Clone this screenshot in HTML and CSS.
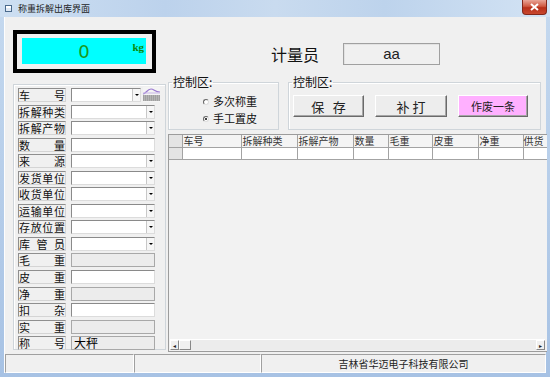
FILE: index.html
```html
<!DOCTYPE html>
<html lang="zh-CN">
<head>
    <meta charset="UTF-8">
    <title>称重拆解出库界面</title>
    <link rel="stylesheet" href="styles.css">
</head>
<body>

<div class="window">
    <div class="titlebar">
        <span class="app_icon"></span>
        <span class="title">称重拆解出库界面</span>
        <span class="close">
            <svg width="9" height="8" viewBox="0 0 9 8"><path d="M1 1 L8 7 M8 1 L1 7" stroke="#fff" stroke-width="2"/></svg>
        </span>
    </div>

    <div class="client">
        <div class="main">
            <div class="left">
                <div class="scale">
                    <div class="screen">
                        <span class="reading">0</span>
                        <span class="unit">kg</span>
                    </div>
                </div>

                <div class="form">
                    <div class="row">
                        <span class="label">车号</span>
                        <span class="field short"><span class="drop"></span></span>
                        <svg class="truck" width="17" height="15" viewBox="0 0 17 15">
                            <rect x="0" y="0" width="17" height="15" fill="#f4f4f4"/>
                            <path d="M0 7 C3 7 4 2 8 2 C11 2 12 5 17 5" stroke="#9b7ad0" stroke-width="1.2" fill="none"/>
                            <path d="M0 6 L17 6" stroke="#c7b5e6" stroke-width="1"/>
                            <rect x="0" y="8" width="17" height="6" fill="#b4b4b4"/>
                            <path d="M0 9 H17 M0 11 H17 M0 13 H17" stroke="#8c8c8c" stroke-width="1" stroke-dasharray="1 1"/>
                        </svg>
                    </div>
                    <div class="row">
                        <span class="label">拆解种类</span>
                        <span class="field"><span class="drop"></span></span>
                    </div>
                    <div class="row">
                        <span class="label">拆解产物</span>
                        <span class="field"><span class="drop"></span></span>
                    </div>
                    <div class="row">
                        <span class="label">数量</span>
                        <span class="field"></span>
                    </div>
                    <div class="row">
                        <span class="label">来源</span>
                        <span class="field"><span class="drop"></span></span>
                    </div>
                    <div class="row">
                        <span class="label">发货单位</span>
                        <span class="field"><span class="drop"></span></span>
                    </div>
                    <div class="row">
                        <span class="label">收货单位</span>
                        <span class="field"><span class="drop"></span></span>
                    </div>
                    <div class="row">
                        <span class="label">运输单位</span>
                        <span class="field"><span class="drop"></span></span>
                    </div>
                    <div class="row">
                        <span class="label">存放位置</span>
                        <span class="field"><span class="drop"></span></span>
                    </div>
                    <div class="row">
                        <span class="label">库管员</span>
                        <span class="field"><span class="drop"></span></span>
                    </div>
                    <div class="row">
                        <span class="label">毛重</span>
                        <span class="field off"></span>
                    </div>
                    <div class="row">
                        <span class="label">皮重</span>
                        <span class="field"></span>
                    </div>
                    <div class="row">
                        <span class="label">净重</span>
                        <span class="field off"></span>
                    </div>
                    <div class="row">
                        <span class="label">扣杂</span>
                        <span class="field"></span>
                    </div>
                    <div class="row">
                        <span class="label">实重</span>
                        <span class="field off"></span>
                    </div>
                    <div class="row">
                        <span class="label">称号</span>
                        <span class="field off">大秤</span>
                    </div>
                </div>
            </div>

            <div class="right">
                <div class="operator">
                    <span class="op_label">计量员</span>
                    <span class="op_box">aa</span>
                </div>

                <div class="controls">
                    <fieldset class="group mode">
                        <legend>控制区:</legend>
                        <div class="radios">
                            <div class="radio"><span class="dot"></span>多次称重</div>
                            <div class="radio"><span class="dot checked"></span>手工置皮</div>
                        </div>
                    </fieldset>
                    <fieldset class="group actions">
                        <legend>控制区:</legend>
                        <div class="buttons">
                            <span class="btn save">保&nbsp;&nbsp;&nbsp;存</span>
                            <span class="btn reprint">补 打</span>
                            <span class="btn cancel">作废一条</span>
                        </div>
                    </fieldset>
                </div>

                <div class="grid">
                    <div class="table_wrap">
                        <table>
                            <colgroup>
                                <col style="width:13px"><col style="width:59px"><col style="width:56px">
                                <col style="width:56px"><col style="width:35px"><col style="width:44px">
                                <col style="width:46px"><col style="width:45px"><col style="width:24px">
                            </colgroup>
                            <tr class="head">
                                <td class="sel"></td><td>车号</td><td>拆解种类</td><td>拆解产物</td><td>数量</td>
                                <td>毛重</td><td>皮重</td><td>净重</td><td class="last">供货</td>
                            </tr>
                            <tr class="data">
                                <td class="sel"></td><td></td><td></td><td></td><td></td>
                                <td></td><td></td><td></td><td class="last"></td>
                            </tr>
                        </table>
                    </div>
                    <div class="hscroll">
                        <span class="arrow">&#9666;</span>
                        <span class="thumb"></span>
                        <span class="track"></span>
                        <span class="arrow">&#9656;</span>
                    </div>
                </div>
            </div>
        </div>

        <div class="status">
            <div class="panel p1"></div>
            <div class="panel p2"></div>
            <div class="panel p3">吉林省华迈电子科技有限公司</div>
        </div>
    </div>
</div>

</body>
</html>
```

FILE: styles.css
```css
* {
    box-sizing: border-box;
}
body {
    margin: 0;
    font-family: "Noto Sans CJK SC", "DejaVu Sans", sans-serif;
    background: #b9cfea;
}
.window {
    width: 550px;
    height: 377px;
    display: flex;
    flex-direction: column;
    overflow: hidden;
    background: linear-gradient(#c5d9ef, #a7c2e4);
}

/* title bar */
.titlebar {
    height: 17px;
    flex: none;
    display: flex;
    align-items: center;
    padding-left: 5px;
    position: relative;
    background: linear-gradient(90deg, #cddff2 0%, #bcd2ec 30%, #c9dbef 50%, #bdd3ec 70%, #d3e3f4 100%);
}
.app_icon {
    width: 7px;
    height: 7px;
    border: 1px solid #4a6a8c;
    background: linear-gradient(#fff 0 2px, #dfe9f5 2px);
}
.title {
    font-size: 9px;
    margin-left: 6px;
    color: #1e1e1e;
    line-height: 10px;
}
.close {
    position: absolute;
    right: 3px;
    top: 0;
    width: 25px;
    height: 15px;
    border: 1px solid #82271a;
    border-top: none;
    border-radius: 0 0 4px 4px;
    background: linear-gradient(#e9a597, #d05a42 45%, #b8301a 55%, #c9482f);
    display: flex;
    align-items: center;
    justify-content: center;
}

/* client area */
.client {
    flex: 1;
    margin: 0 4px 4px 4px;
    background: #f0f0f0;
    border-left: 1px solid #fdfdfd;
    display: flex;
    flex-direction: column;
}
.main {
    flex: 1;
    display: flex;
}
.left {
    width: 161px;
    padding-left: 8px;
    padding-top: 13px;
}

/* weight display */
.scale {
    width: 143px;
    height: 43px;
    border: 4px solid #000;
    padding: 4px 6px 5px 5px;
    background: #f0f0f0;
}
.screen {
    height: 100%;
    background: #00ffff;
    display: flex;
    align-items: center;
    justify-content: center;
    position: relative;
}
.reading {
    font-family: "DejaVu Sans", sans-serif;
    font-size: 18px;
    color: #1a9a1a;
}
.unit {
    position: absolute;
    right: 2px;
    top: 3px;
    font-family: "Liberation Serif", serif;
    font-weight: bold;
    font-size: 11px;
    color: #0a8a0a;
}

/* left form */
.form {
    margin-top: 11px;
    width: 153px;
    height: 266px;
    border: 1px solid #cfd5da;
    box-shadow: inset 1px 1px #fff;
    padding: 3px 0 0 4px;
    display: flex;
    flex-direction: column;
    gap: 2.55px;
}
.row {
    display: flex;
    align-items: center;
    height: 14px;
    gap: 5px;
}
.label {
    width: 48px;
    height: 14px;
    flex: none;
    border: 1px solid;
    border-color: #8e8e8e #d4d4d4 #d4d4d4 #8e8e8e;
    font-size: 11px;
    line-height: 12px;
    text-align: justify;
    text-align-last: justify;
    white-space: nowrap;
    overflow: hidden;
    padding: 0;
    color: #111;
}
.field {
    width: 84px;
    height: 14px;
    flex: none;
    background: #fff;
    border: 1px solid;
    border-color: #8a8a8a #dcdcdc #dcdcdc #8a8a8a;
    display: flex;
    justify-content: flex-end;
    font-size: 12px;
    line-height: 12px;
    padding-left: 2px;
}
.field.short {
    width: 70px;
}
.field.off {
    background: #ececec;
    border-color: #a8a8a8;
    justify-content: flex-start;
}
.drop {
    width: 8px;
    height: 12px;
    background: #f6f6f6;
    border-left: 1px solid #c8c8c8;
    position: relative;
}
.drop:after {
    content: '';
    position: absolute;
    left: 2px;
    top: 5px;
    border-top: 2px solid #000;
    border-left: 2px solid transparent;
    border-right: 2px solid transparent;
}
.truck {
    margin-left: -3px;
    margin-top: -1px;
    flex: none;
}

/* right column */
.right {
    width: 379px;
    margin-left: 2px;
    display: flex;
    flex-direction: column;
}
.operator {
    margin-top: 26px;
    height: 22px;
    display: flex;
    align-items: center;
    padding-left: 103px;
    gap: 24px;
}
.op_label {
    font-size: 16px;
    color: #111;
}
.op_box {
    width: 97px;
    height: 22px;
    border: 1px solid #a0a0a0;
    box-shadow: inset 1px 1px #e2e2e2;
    font-family: "Liberation Sans", sans-serif;
    font-size: 15px;
    line-height: 19px;
    text-align: center;
    color: #222;
}
.controls {
    margin-top: 11px;
    display: flex;
    gap: 9px;
}
.group {
    margin: 0;
    height: 54px;
    border: 1px solid #cfd5da;
    box-shadow: inset 1px 1px #fff;
    padding: 0;
}
.group legend {
    font-size: 12px;
    line-height: 12px;
    padding: 0 1px;
    margin-left: 3px;
    color: #111;
}
.mode {
    width: 111px;
}
.radios {
    padding: 5px 0 0 34px;
}
.radio {
    display: flex;
    align-items: center;
    gap: 4px;
    font-size: 11px;
    line-height: 17px;
    color: #111;
}
.dot {
    width: 6px;
    height: 6px;
    border-radius: 50%;
    border: 1px solid #666;
    border-right-color: #ddd;
    border-bottom-color: #ddd;
    background: #fff;
    position: relative;
}
.dot.checked:after {
    content: '';
    position: absolute;
    left: 1px;
    top: 1px;
    width: 2px;
    height: 2px;
    background: #000;
    border-radius: 50%;
}
.actions {
    width: 253px;
}
.buttons {
    padding: 7px 0 0 4px;
    display: flex;
    gap: 11px;
}
.btn {
    width: 71px;
    height: 22px;
    border: 1px solid;
    border-color: #fff #6a6a6a #6a6a6a #fff;
    box-shadow: inset -1px -1px #a6a6a6;
    background: #ededed;
    display: flex;
    align-items: center;
    justify-content: center;
    font-size: 13px;
    color: #222;
}
.reprint {
    width: 72px;
}
.cancel {
    width: 70px;
    background: #ffb0ff;
    font-size: 11px;
}

/* data grid */
.grid {
    margin-top: 4px;
    height: 218px;
    border: 1px solid #9c9c9c;
    border-right: none;
    background: #f2f2f2;
    display: flex;
    flex-direction: column;
}
.table_wrap {
    flex: 1;
}
table {
    border-collapse: collapse;
    table-layout: fixed;
    width: 378px;
}
td {
    border: 1px solid #a3a3a3;
    border-top: none;
    height: 12px;
    font-size: 10px;
    line-height: 12px;
    padding: 0 1px;
    white-space: nowrap;
    vertical-align: top;
    color: #333;
}
td.last {
    border-right: none;
    padding: 0;
}
.head td {
    background: #f4f4f4;
}
.data td {
    background: #fff;
}
td.sel {
    background: #e4e4e4;
    border-left: none;
}
.hscroll {
    height: 11px;
    display: flex;
    align-items: stretch;
    background: #ececec;
    border-top: 1px solid #fff;
    margin: 0 2px 1px 1px;
}
.arrow {
    width: 9px;
    font-size: 6px;
    line-height: 10px;
    text-align: center;
    color: #222;
    border: 1px solid;
    border-color: #fff #888 #888 #fff;
    background: #f0f0f0;
}
.thumb {
    width: 12px;
    border: 1px solid;
    border-color: #fff #888 #888 #fff;
    background: #f0f0f0;
}
.track {
    flex: 1;
}

/* status bar */
.status {
    height: 19px;
    flex: none;
    display: flex;
    margin-top: 1px;
}
.panel {
    border: 1px solid;
    border-color: #a0a0a0 #fff #fff #a0a0a0;
    font-size: 10px;
    line-height: 17px;
    text-align: center;
    color: #222;
}
.p1 {
    width: 129px;
}
.p2 {
    width: 127px;
}
.p3 {
    flex: 1;
}
```
